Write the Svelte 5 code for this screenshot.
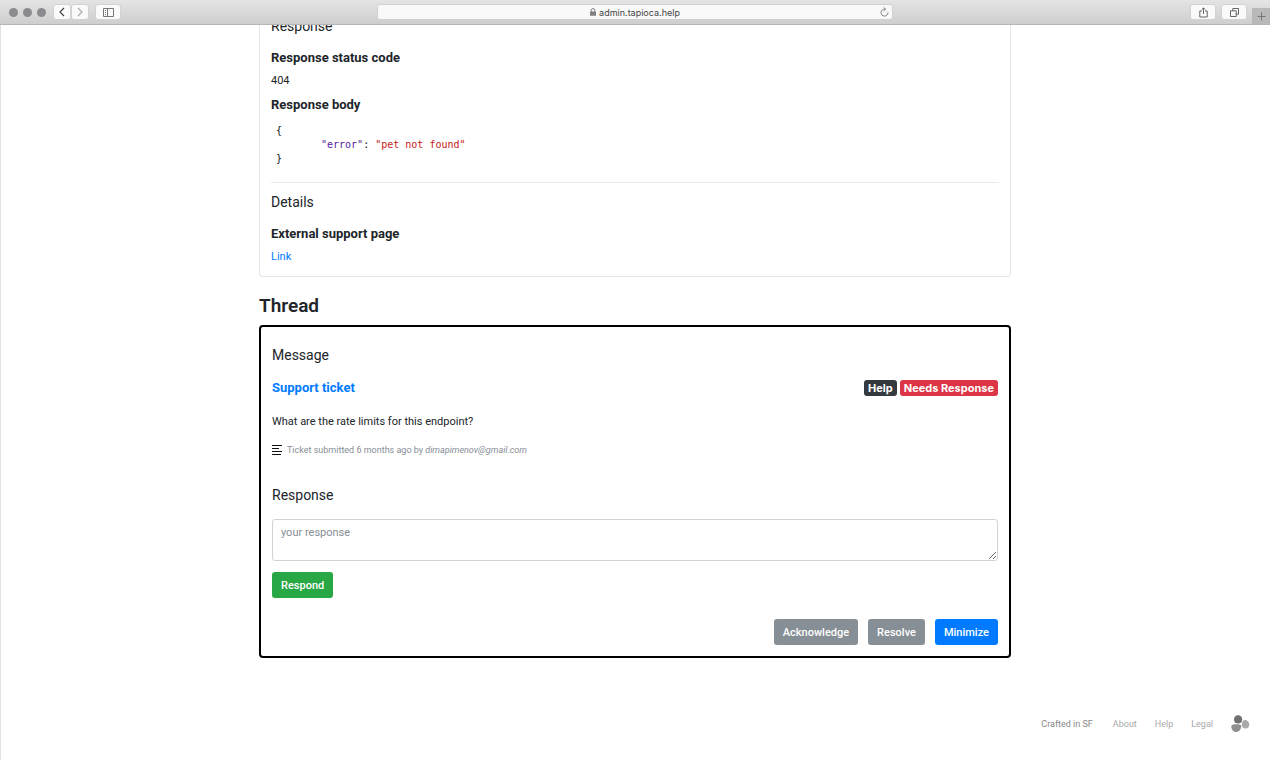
<script>
  let response = $state("");
  let minimized = $state(false);

  const footerLinks = ["About", "Help", "Legal"];

  function handleRespond() {
    console.log("Respond:", { response });
    response = "";
  }
</script>

<div class="window">
  <header class="toolbar">
    <div class="tools">
      <div class="lights"><i></i><i></i><i></i></div>
      <div class="nav">
        <button aria-label="Back">
          <svg width="8" height="10" viewBox="0 0 8 10"><path d="M6 1 2 5l4 4" stroke="#444" stroke-width="1.2" /></svg>
        </button>
        <button aria-label="Forward">
          <svg width="8" height="10" viewBox="0 0 8 10"><path d="m2 1 4 4-4 4" stroke="#aaa" stroke-width="1.2" /></svg>
        </button>
      </div>
      <button aria-label="Show sidebar">
        <svg width="11" height="9" viewBox="0 0 11 9">
          <path d="M.5.5h10v8H.5zM4.5.5v8M2 2.5h1M2 4.5h1M2 6.5h1" stroke="#777" />
        </svg>
      </button>
    </div>
    <div class="address">
      <svg width="6" height="8" viewBox="0 0 6 8">
        <path d="M1.2 4V2.4a1.8 1.8 0 0 1 3.6 0V4" stroke="#808080" />
        <rect y="3.4" width="6" height="4.4" rx=".5" fill="#808080" />
      </svg>
      <span>admin.tapioca.help</span>
      <button class="reload" aria-label="Reload">
        <svg width="9" height="10" viewBox="0 0 9 10">
          <path d="M5 2.1A3.5 3.5 0 1 0 8 5.4M3.7.4l2 1.8-2 1.6" stroke="#777" stroke-width=".9" />
        </svg>
      </button>
    </div>
    <div class="tools right">
      <button aria-label="Share">
        <svg width="9" height="11" viewBox="0 0 9 11">
          <path d="M3 4H.8v6h7.4V4H6M4.5 7V1M2.7 2.7 4.5.9l1.8 1.8" stroke="#555" stroke-width=".9" />
        </svg>
      </button>
      <button aria-label="Show all tabs">
        <svg width="9" height="9" viewBox="0 0 9 9">
          <path d="M2.8 2.8V.5h5.7v5.7H6.2M.5 2.8h5.7v5.7H.5z" stroke="#555" stroke-width=".9" />
        </svg>
      </button>
      <button class="new-tab" aria-label="New tab">
        <svg width="9" height="9" viewBox="0 0 9 9"><path d="M4.5.5v8M.5 4.5h8" stroke="#777" /></svg>
      </button>
    </div>
  </header>

  <div class="page">
    <main>
      <section class="card">
        <h3>Response</h3>
        <h4>Response status code</h4>
        <p>404</p>
        <h4>Response body</h4>
        <pre>{"{\n\t"}<span class="key">"error"</span>: <span class="string">"pet not found"</span>{"\n}"}</pre>
        <hr />
        <h3>Details</h3>
        <h4>External support page</h4>
        <p><a href="#support">Link</a></p>
      </section>

      <h2>Thread</h2>

      <section class="thread">
        <h3>Message</h3>
        <div class="ticket">
          <h4><a href="#ticket">Support ticket</a></h4>
          <div class="badges">
            <span class="badge dark">Help</span>
            <span class="badge danger">Needs Response</span>
          </div>
        </div>
        <p>What are the rate limits for this endpoint?</p>
        <div class="meta">
          <svg width="10" height="10" viewBox="0 0 10 10">
            <path d="M0 .5h10M0 3.5h7M0 6.5h10M0 9.5h9" stroke="#111" stroke-width="1.2" />
          </svg>
          <small>Ticket submitted 6 months ago by <em>dimapimenov@gmail.com</em></small>
        </div>

        {#if !minimized}
          <h3><label for="response">Response</label></h3>
          <textarea id="response" placeholder="your response" bind:value={response}></textarea>
          <button class="btn success" onclick={handleRespond}>Respond</button>
        {/if}

        <div class="actions">
          <button class="btn secondary">Acknowledge</button>
          <button class="btn secondary">Resolve</button>
          <button class="btn primary" onclick={() => (minimized = !minimized)}>Minimize</button>
        </div>
      </section>
    </main>

    <footer>
      <span>Crafted in SF</span>
      {#each footerLinks as link}
        <a href="#{link.toLowerCase()}">{link}</a>
      {/each}
      <svg width="19" height="18" viewBox="0 0 19 18">
        <path d="M7 .3c2.7 0 4.2 1.7 4.2 4.2S9.7 8.6 7 8.6 3 7 3 4.5 4.5.3 7 .3z" fill="#6f6f6f" />
        <path d="M14 4.9c2.5 0 4.5 2.5 4.3 5.2-.2 2.3-1.6 3.5-3.6 3.5-2.5 0-4-1.6-3.9-4.1.1-2.5 1.2-4.6 3.2-4.6z" fill="#a9a9a9" />
        <path d="M.8 10.3c1.5-1.2 7.5-1.3 9-.2 1.3 1-.4 7-4.6 7S-.6 11.5.8 10.3z" fill="#8e8e8e" />
      </svg>
    </footer>
  </div>
</div>

<style>
  :global(body) {
    background: #fff;
    color: #212529;
    font-family: Roboto, "Liberation Sans", sans-serif;
    font-size: 11px;
  }

  .window {
    min-height: 100vh;
    box-shadow: inset 1px 0 #e3e3e3;
  }

  button {
    font-family: inherit;
    cursor: pointer;
  }

  svg {
    display: block;
    fill: none;
  }

  a {
    color: #007bff;
    text-decoration: none;
  }

  .toolbar {
    position: relative;
    z-index: 1;
    display: grid;
    grid-template-columns: 1fr minmax(200px, 516px) 1fr;
    align-items: center;
    height: 25px;
    border-bottom: 1px solid #b5b5b5;
    background: linear-gradient(#e4e4e4, #cecece);
    box-sizing: border-box;
  }

  .tools {
    display: flex;
    align-items: center;
    gap: 6px;
    padding-left: 9px;
  }

  .tools button {
    display: flex;
    align-items: center;
    justify-content: center;
    width: 26px;
    height: 16px;
    padding: 0;
    border: 1px solid #d2d2d2;
    border-radius: 3px;
    background: #fafafa;
  }

  .lights {
    display: flex;
    gap: 5px;
    margin-right: 1px;
  }

  .lights i {
    width: 9px;
    height: 9px;
    border-radius: 50%;
    background: #8b8b8f;
  }

  .nav {
    display: flex;
  }

  .tools .nav button {
    width: 18px;
  }

  .right {
    justify-content: flex-end;
    align-self: stretch;
    gap: 5px;
  }

  .tools .new-tab {
    align-self: flex-end;
    width: 18px;
    border: 0;
    border-radius: 0;
    background: #b9b9b9;
  }

  .address {
    position: relative;
    display: flex;
    align-items: center;
    justify-content: center;
    gap: 3px;
    height: 16px;
    border: 1px solid #d0d0d0;
    border-radius: 3px;
    background: #f9f9f9;
    color: #444;
    font-family: Inter, sans-serif;
    font-size: 9px;
    box-sizing: border-box;
  }

  .reload {
    position: absolute;
    right: 3px;
    padding: 0;
    border: 0;
    background: none;
  }

  .page {
    overflow: hidden;
  }

  main {
    max-width: 752px;
    margin: 0 auto;
  }

  h2,
  h3,
  h4,
  p,
  pre {
    margin: 0;
  }

  h2 {
    margin: 16px 0 6px;
    font-size: 19px;
    line-height: 26px;
    font-weight: 600;
  }

  h3 {
    font-size: 14px;
    line-height: 22px;
    font-weight: 400;
  }

  h4 {
    font-size: 13px;
    line-height: 20px;
    font-weight: 700;
  }

  p {
    line-height: 18px;
  }

  /* the page is scrolled: the first card runs up under the toolbar */
  .card {
    margin-top: -10px;
    padding: 0 11px 10px;
    border: 1px solid #e6e6e6;
    border-top: 0;
    border-radius: 0 0 4px 4px;
  }

  .card h3 {
    margin-bottom: 11px;
  }

  .card h4 {
    margin-bottom: 4px;
  }

  .card p + h4 {
    margin-top: 5px;
  }

  pre {
    margin: 9px 0 16px;
    padding-left: 5px;
    color: #111;
    font-family: "DejaVu Sans Mono", monospace;
    font-size: 10px;
    line-height: 14px;
    tab-size: 45px;
  }

  .key {
    color: #551a9b;
  }

  .string {
    color: #c41a16;
  }

  hr {
    margin: 0 0 8px;
    border: 0;
    border-top: 1px solid #ebebeb;
  }

  .thread {
    padding: 17px 11px 11px;
    border: 2px solid #000;
    border-radius: 4px;
  }

  .ticket {
    display: flex;
    align-items: center;
    justify-content: space-between;
    margin: 12px 0 15px;
  }

  .badges {
    display: flex;
    gap: 3px;
  }

  .badge {
    padding: 0 4px;
    border-radius: 3px;
    color: #fff;
    font-family: Inter, sans-serif;
    font-size: 11px;
    line-height: 16px;
    font-weight: 700;
  }

  .dark {
    background: #343a40;
  }

  .danger {
    background: #dc3545;
  }

  .meta {
    display: flex;
    align-items: center;
    gap: 5px;
    margin: 12px 0 27px;
    color: #868e96;
  }

  .meta small {
    font-size: 9px;
    line-height: 14px;
  }

  textarea {
    display: block;
    width: 100%;
    height: 42px;
    margin: 13px 0 11px;
    padding: 5px 8px;
    border: 1px solid #ced4da;
    border-radius: 3px;
    color: #495057;
    font-family: inherit;
    font-size: 11px;
    line-height: 16px;
    box-sizing: border-box;
  }

  textarea::placeholder {
    color: #868e96;
  }

  .btn {
    height: 26px;
    padding: 0 9px;
    border: 0;
    border-radius: 3px;
    color: #fff;
    font-size: 11px;
    font-weight: 500;
  }

  .success {
    background: #28a745;
  }

  .secondary {
    background: #868e96;
  }

  .primary {
    background: #007bff;
  }

  .actions {
    display: flex;
    justify-content: flex-end;
    gap: 10px;
    margin-top: 21px;
  }

  footer {
    display: flex;
    align-items: center;
    justify-content: flex-end;
    gap: 18px;
    margin: 57px 20px 26px;
    color: #888;
    font-size: 9px;
  }

  footer span {
    margin-right: 2px;
  }

  footer a {
    color: #aaa;
  }
</style>
